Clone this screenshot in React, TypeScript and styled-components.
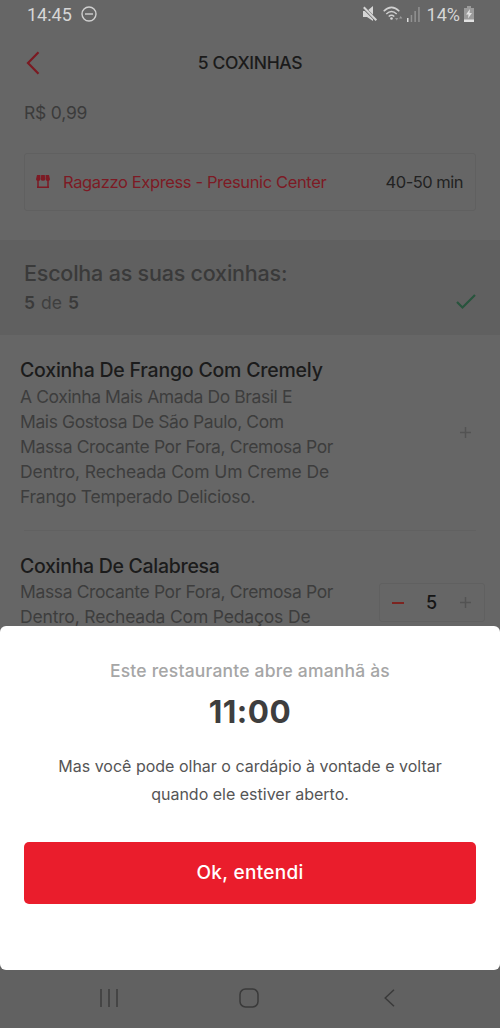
import React from "react";
import styled, { createGlobalStyle } from "styled-components";

const Global = createGlobalStyle`
  * { box-sizing: border-box; }
  body { margin: 0; background: #666; }
`;

const Screen = styled.div`
  position: relative;
  display: flex;
  flex-direction: column;
  width: 500px;
  height: 1028px;
  overflow: hidden;
  background: #666;
  font-family: Inter, "Liberation Sans", sans-serif;
`;

const Text = styled.span<{
  $size: number;
  $color: string;
  $weight?: number;
  $spacing?: number;
  $line?: number;
}>`
  display: block;
  white-space: nowrap;
  font-size: ${(p) => p.$size}px;
  color: ${(p) => p.$color};
  font-weight: ${(p) => p.$weight ?? 400};
  letter-spacing: ${(p) => p.$spacing ?? 0}px;
  line-height: ${(p) => p.$line ?? 24}px;
`;

const StatusBar = styled.div`
  display: flex;
  align-items: center;
  height: 30px;
  padding: 0 26px 2px 27px;
  font-family: Roboto, sans-serif;
  font-size: 18px;
  color: #d6d6d6;
  svg { display: block; }
`;

const Clock = styled.span`
  flex: 1;
  display: flex;
  align-items: center;
  gap: 9px;
`;

const StatusIcons = styled.span`
  display: flex;
  align-items: center;
  gap: 4px;
`;

const Percent = styled.span`
  margin-left: 3px;
`;

const Header = styled.header`
  display: grid;
  grid-template-columns: 60px 1fr 60px;
  align-items: center;
  justify-items: center;
  height: 66px;
  svg { display: block; margin-left: 6px; }
`;

const Price = styled.div`
  height: 57px;
  padding: 5px 24px 0;
`;

const StoreCard = styled.div`
  display: flex;
  align-items: center;
  height: 58px;
  margin: 0 24px 29px;
  padding: 0 12px 0 11px;
  border: 1px solid #606060;
  border-radius: 3px;
  svg { margin-right: 13px; }
`;

const Push = styled.div`
  margin-left: auto;
`;

const GroupHeader = styled.section`
  display: flex;
  justify-content: space-between;
  height: 95px;
  padding: 19px 24px;
  background: #606060;
  svg { margin-top: 35px; }
`;

const Count = styled.div`
  display: flex;
  gap: 6px;
  margin-top: 4px;
`;

const Item = styled.article<{ $height: number; $divider?: boolean }>`
  position: relative;
  display: flex;
  justify-content: space-between;
  height: ${(p) => p.$height}px;
  padding: 0 15px 0 20px;
  &::after {
    content: "";
    display: ${(p) => (p.$divider ? "block" : "none")};
    position: absolute;
    left: 24px;
    right: 24px;
    bottom: 0;
    border-bottom: 1px solid #616161;
  }
`;

const ItemCopy = styled.div`
  padding-top: 22px;
`;

const Stepper = styled.div<{ $outlined?: boolean; $top: number }>`
  display: flex;
  align-items: center;
  justify-content: space-between;
  width: 106px;
  height: 39px;
  margin-top: ${(p) => p.$top}px;
  padding: 0 12px;
  border: 1px solid ${(p) => (p.$outlined ? "#606060" : "transparent")};
  border-radius: 3px;
`;

const Sheet = styled.section`
  position: absolute;
  left: 0;
  right: 0;
  top: 626px;
  height: 344px;
  padding: 33px 24px 0;
  display: flex;
  flex-direction: column;
  align-items: center;
  border-radius: 6px;
  background: #fff;
`;

const Message = styled.div`
  display: flex;
  flex-direction: column;
  align-items: center;
  margin: 11px 0 34px;
`;

const Confirm = styled.button`
  display: flex;
  align-items: center;
  justify-content: center;
  width: 452px;
  height: 62px;
  padding: 0;
  border: 0;
  border-radius: 5px;
  background: #ea1d2c;
  font-family: inherit;
`;

const Content = styled.main`
  flex: 1;
  min-height: 0;
  overflow: hidden;
`;

const NavBar = styled.nav`
  display: grid;
  grid-template-columns: 140px 140px 140px;
  justify-content: center;
  align-items: center;
  justify-items: center;
  height: 61px;
  padding: 0 2px 0 0;
  background: #616161;
  svg { display: block; }
`;

const Plus = () => (
  <svg width="13" height="13" viewBox="0 0 13 13" stroke="#535353" strokeWidth="1.5">
    <path d="M6.5 1v11M1 6.5h11" />
  </svg>
);

const Minus = () => (
  <svg width="12" height="12" viewBox="0 0 12 12" stroke="#7c2420" strokeWidth="2">
    <path d="M0 6h12" />
  </svg>
);

const firstCopy: [string, number][] = [
  ["A Coxinha Mais Amada Do Brasil E", -0.4],
  ["Mais Gostosa De São Paulo, Com", -0.4],
  ["Massa Crocante Por Fora, Cremosa Por", -0.37],
  ["Dentro, Recheada Com Um Creme De", -0.1],
  ["Frango Temperado Delicioso.", -0.27],
];
const secondCopy: [string, number][] = [
  ["Massa Crocante Por Fora, Cremosa Por", -0.37],
  ["Dentro, Recheada Com Pedaços De", -0.17],
];

const Description = ({ lines }: { lines: [string, number][] }) => (
  <>
    {lines.map(([line, spacing]) => (
      <Text key={line} $size={17.5} $color="#3d3d3d" $spacing={spacing} $line={25}>{line}</Text>
    ))}
  </>
);

export default function App() {
  return (
    <Screen>
      <Global />
      <StatusBar>
        <Clock>
          14:45
          <svg width="16" height="16" viewBox="0 0 16 16" fill="none" stroke="#d0d0d0" strokeWidth="1.4">
            <circle cx="8" cy="8" r="7" />
            <path d="M4 8h8" />
          </svg>
        </Clock>
        <StatusIcons>
          <svg width="16" height="16" viewBox="0 0 16 16">
            <path d="M0 5h4l6-5v15l-6-4H0z" fill="#d6d6d6" />
            <path d="M0 1l14 14" stroke="#666" strokeWidth="3.2" />
            <path d="M.8 1.200l12.500 13" stroke="#d6d6d6" strokeWidth="2" />
          </svg>
          <svg width="20" height="16" viewBox="0 0 20 16" fill="none" stroke="#d0d0d0" strokeWidth="1.5">
            <path d="M.7 5.300Q8.500-2.500 16.300 5.300M3.300 8Q8.500 3 13.700 8M5.700 10.500Q8.500 8 11.300 10.500" />
            <circle cx="8.500" cy="12.500" r="1.300" fill="#d6d6d6" stroke="none" />
            <path d="M12 12h3.400l-1.700 2.600zM16 12.600h3.400l-1.700-2.600z" fill="#999" stroke="none" />
          </svg>
          <svg width="13" height="15" viewBox="0 0 13 15">
            <path d="M0 11h1.500v4H0z" fill="#ddd" />
            <path d="M3.700 8h1.500v7H3.700zM7.400 4h1.500v11H7.400zM11.200 0h1.500v15h-1.500z" fill="#929292" />
          </svg>
          <Percent>14%</Percent>
          <svg width="10" height="16" viewBox="0 0 10 16">
            <path d="M3 0h4v2h3v14H0V2h3z" fill="#9b9b9b" />
            <path d="M0 13.500h10V16H0zM6 3L2 8.500h2.500L4 12.500l4-5.500H5.500z" fill="#e2e2e2" />
          </svg>
        </StatusIcons>
      </StatusBar>
      <Content>
        <Header>
          <svg width="14" height="24" viewBox="0 0 14 24" fill="none" stroke="#7b1a22" strokeWidth="2.2">
            <path d="M12.500 1.200L2 12l10.500 10.800" />
          </svg>
          <Text $size={17.5} $weight={500} $color="#1b1b1b" $spacing={-0.33}>5 COXINHAS</Text>
        </Header>
        <Price>
          <Text $size={17.5} $color="#3b3b3b" $spacing={-0.2}>R$ 0,99</Text>
        </Price>
        <StoreCard>
          <svg width="14" height="14" viewBox="0 0 14 14">
            <path
              d="M1 0h3.400v4.200a2.100 1.600 0 0 1-4.400 0zM5.200 0h3.600l.4 4.200a2.200 1.600 0 0 1-4.400 0zM9.600 0H13l1 4.200a2.100 1.600 0 0 1-4.400 0z"
              fill="#7d1a24"
            />
            <path d="M2 5v7.200h10V5M1 12.300h12" fill="none" stroke="#7d1a24" strokeWidth="1.500" />
          </svg>
          <Text $size={16.5} $color="#7d1a24" $spacing={-0.37}>Ragazzo Express - Presunic Center</Text>
          <Push><Text $size={16.5} $color="#222" $spacing={-0.5}>40-50 min</Text></Push>
        </StoreCard>
        <GroupHeader>
          <div>
            <Text $size={21.5} $weight={550} $color="#3a3a3a" $spacing={-0.2} $line={28}>Escolha as suas coxinhas:</Text>
            <Count>
              <Text $size={17.5} $weight={600} $color="#3a3a3a">5</Text>
              <Text $size={17.5} $color="#3f3f3f">de</Text>
              <Text $size={17.5} $weight={600} $color="#3a3a3a">5</Text>
            </Count>
          </div>
          <svg width="20" height="16" viewBox="0 0 20 16" fill="none" stroke="#28543d" strokeWidth="2.200">
            <path d="M1 8l5.500 5.500L19 1" />
          </svg>
        </GroupHeader>
        <Item $height={196} $divider>
          <ItemCopy>
            <Text $size={19.5} $weight={500} $color="#1b1b1b" $spacing={-0.21} $line={27}>Coxinha De Frango Com Cremely</Text>
            <Description lines={firstCopy} />
          </ItemCopy>
          <Stepper $top={78}><span /><Plus /></Stepper>
        </Item>
        <Item $height={195}>
          <ItemCopy>
            <Text $size={19.5} $weight={500} $color="#1b1b1b" $spacing={-0.3} $line={26}>Coxinha De Calabresa</Text>
            <Description lines={secondCopy} />
          </ItemCopy>
          <Stepper $top={52} $outlined>
            <Minus />
            <Text $size={18} $weight={500} $color="#151515">5</Text>
            <Plus />
          </Stepper>
        </Item>
      </Content>
      <NavBar>
        <svg width="18" height="18" viewBox="0 0 18 18" stroke="#3a3a3a" strokeWidth="1.400">
          <path d="M1 0v18M9 0v18M17 0v18" />
        </svg>
        <svg width="20" height="20" viewBox="0 0 20 20" fill="none" stroke="#3a3a3a" strokeWidth="1.500">
          <rect x="1" y="1" width="18" height="18" rx="5.500" />
        </svg>
        <svg width="11" height="18" viewBox="0 0 11 18" fill="none" stroke="#3a3a3a" strokeWidth="1.500">
          <path d="M10 .8L1.200 9l8.800 8.200" />
        </svg>
      </NavBar>
      <Sheet>
        <Text $size={17.5} $weight={500} $color="#a6a6a6" $spacing={0.2}>Este restaurante abre amanhã às</Text>
        <Text $size={31.5} $weight={700} $color="#3e3e3e" $spacing={0.46} $line={58}>11:00</Text>
        <Message>
          <Text $size={16} $color="#555" $line={28}>Mas você pode olhar o cardápio à vontade e voltar</Text>
          <Text $size={16} $color="#555" $line={28}>quando ele estiver aberto.</Text>
        </Message>
        <Confirm>
          <Text $size={19} $weight={550} $color="#fff" $spacing={0.3}>Ok, entendi</Text>
        </Confirm>
      </Sheet>
    </Screen>
  );
}
